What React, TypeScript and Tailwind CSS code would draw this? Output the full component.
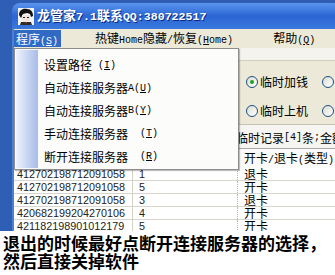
import React from "react";

const rows = [
  { id: "412702198712091058", n: "1", t: "退卡" },
  { id: "412702198712091058", n: "5", t: "开卡" },
  { id: "412702198712091058", n: "3", t: "退卡" },
  { id: "420682199204270106", n: "4", t: "开卡" },
  { id: "421182198901012179", n: "5", t: "开卡" },
];

const menuItems: { zh: string; key: React.ReactNode }[] = [
  { zh: "设置路径", key: <>&nbsp;(<u>I</u>)</> },
  { zh: "自动连接服务器", key: <>A(<u>U</u>)</> },
  { zh: "自动连接服务器", key: <>B(<u>Y</u>)</> },
  { zh: "手动连接服务器", key: <>&nbsp;&nbsp;(<u>T</u>)</> },
  { zh: "断开连接服务器", key: <>&nbsp;&nbsp;(<u>R</u>)</> },
];

// half-width latin, like SimSun
function L({ children }: { children: React.ReactNode }) {
  return <span className="font-['Liberation_Mono',monospace] text-[10px]">{children}</span>;
}

function Radio({ checked, label }: { checked?: boolean; label: string }) {
  return (
    <div className="flex items-center h-[14px] w-[76px] shrink-0">
      <span className="w-[12px] h-[12px] rounded-full border border-[#1c5180] bg-gradient-to-br from-[#dcdcd4] to-white flex items-center justify-center">
        {checked && <span className="w-[4px] h-[4px] rounded-full bg-[#21a121]" />}
      </span>
      <span className="ml-[2px] text-[12px] leading-[14px] text-black">{label}</span>
    </div>
  );
}

function TitleIcon() {
  return (
    <svg width="16" height="17" viewBox="0 0 16 17">
      <rect x="0" y="0" width="16" height="17" fill="#f4f4f4" />
      <path d="M1 7 C1 2 5 0 9 1 C13 1 15 4 15 8 L13 9 L12 6 L9 5 L5 6 L3 10 Z" fill="#111" />
      <path d="M4 7 L12 7 L12 12 L9 14 L6 14 L4 12 Z" fill="#f0e6dc" />
      <path d="M5 9 h2 v1 h-2z M9 9 h2 v1 h-2z" fill="#222" />
      <path d="M3 14 L13 14 L14 17 L2 17 Z" fill="#2c2c2c" />
      <path d="M7 14 L9 14 L8 16 Z" fill="#c03030" />
    </svg>
  );
}

export default function App() {
  return (
    <div className="relative w-[335px] h-[275px] bg-white overflow-hidden font-['Noto_Sans_CJK_SC',sans-serif]">
      {/* Screenshot */}
      <div className="h-[231px] bg-[#2e5fb4] pl-[12px] pt-[3px] flex flex-col">
        {/* Title bar */}
        <div className="h-[26px] shrink-0 rounded-tl-[8px] bg-gradient-to-b from-[#5b95ee] via-[#2b66d4] to-[#3a78dc] flex items-center pl-[6px]">
          <TitleIcon />
          <span className="ml-[3px] text-white font-bold text-[13px] leading-[14px] [text-shadow:1px_1px_0_#0a2a80]">
            龙管家
            <span className="font-['Liberation_Mono',monospace] text-[11.6px]">7.1</span>
            联系
            <span className="font-['Liberation_Mono',monospace] text-[11.6px]">QQ:380722517</span>
          </span>
        </div>

        {/* Window body */}
        <div className="flex-1 flex flex-col border-l-[2px] border-[#4d7fd6] bg-[#ece9d8] overflow-hidden">
          {/* Menu bar */}
          <div className="h-[19px] shrink-0 flex items-center text-[12px] leading-[17px] text-black">
            <span className="h-[17px] w-[47px] bg-[#316ac5] text-white pl-[2px]">
              程序<L>(<u>S</u>)</L>
            </span>
            <span className="ml-[34px]">
              热键<L>Home</L>隐藏<L>/</L>恢复<L>(<u>H</u>ome)</L>
            </span>
            <span className="ml-[40px]">
              帮助<L>(<u>Q</u>)</L>
            </span>
          </div>

          <div className="h-[12px] shrink-0 bg-[#f4f3ee]" />

          {/* Group box */}
          <div className="h-[65px] shrink-0 border-t border-t-[#d0d0bf] border-b border-b-[#c5c2b2] flex flex-col pt-[14px] gap-[15px] pl-[232px]">
            <div className="flex">
              <Radio checked label="临时加钱" />
              <Radio label="临时减钱" />
            </div>
            <div className="flex">
              <Radio label="临时上机" />
              <Radio label="临时下机" />
            </div>
          </div>

          {/* Summary line */}
          <div className="h-[23px] shrink-0 bg-[#f6f5f1] flex items-center pl-[210px] pt-[2px] text-[12px] text-black whitespace-nowrap">
            剩临时记录<L>[4]</L>条<L>;</L>金额
          </div>

          {/* Table */}
          <div className="bg-white">
            <div className="h-[20px] flex border-t border-[#a7a6aa] bg-[#fbfbf9] text-[12px] leading-[18px] text-black">
              <div className="w-[119px] shrink-0 border-r border-[#d4d0c8]" />
              <div className="w-[105px] shrink-0 border-r border-[#a7a6aa]" />
              <div className="pl-[6px] whitespace-nowrap">
                开卡<L>/</L>退卡<L>(</L>类型<L>)</L>
              </div>
            </div>
            {rows.map((r, i) => (
              <div key={i} className="h-[13px] flex border-b border-[#d8d5cc] text-black leading-[12px]">
                <div className="w-[119px] shrink-0 border-r border-[#d4d0c8] pl-[3px] font-['Liberation_Sans',sans-serif] text-[10.8px] text-[#222]">
                  {r.id}
                </div>
                <div className="w-[105px] shrink-0 border-r border-dotted border-[#b8b8b8] pl-[6px] font-['Liberation_Sans',sans-serif] text-[10.8px] text-[#222]">
                  {r.n}
                </div>
                <div className="pl-[6px] text-[12px]">{r.t}</div>
              </div>
            ))}
          </div>
        </div>
      </div>

      {/* Caption */}
      <div className="pl-[3px] pt-[3px] text-[17px] leading-[18px] font-bold text-black whitespace-nowrap">
        <div>退出的时候最好点断开连接服务器的选择，</div>
        <div>然后直接关掉软件</div>
      </div>

      {/* Dropdown menu (open) */}
      <div className="absolute left-[14px] top-[48px] w-[225px] h-[122px] bg-[#fcfcfa] border border-[#8d8d8d] shadow-[1px_1px_1px_rgba(0,0,0,0.25)] flex p-[1px]">
        <div className="w-[22px] shrink-0 bg-gradient-to-r from-[#eef2fb] to-[#a7bce9]" />
        <div className="flex flex-col pt-[4px] pl-[6px] text-[12px] text-black">
          {menuItems.map((m, i) => (
            <div key={i} className="h-[23px] flex items-center whitespace-nowrap">
              {m.zh}
              <L>{m.key}</L>
            </div>
          ))}
        </div>
      </div>
    </div>
  );
}
